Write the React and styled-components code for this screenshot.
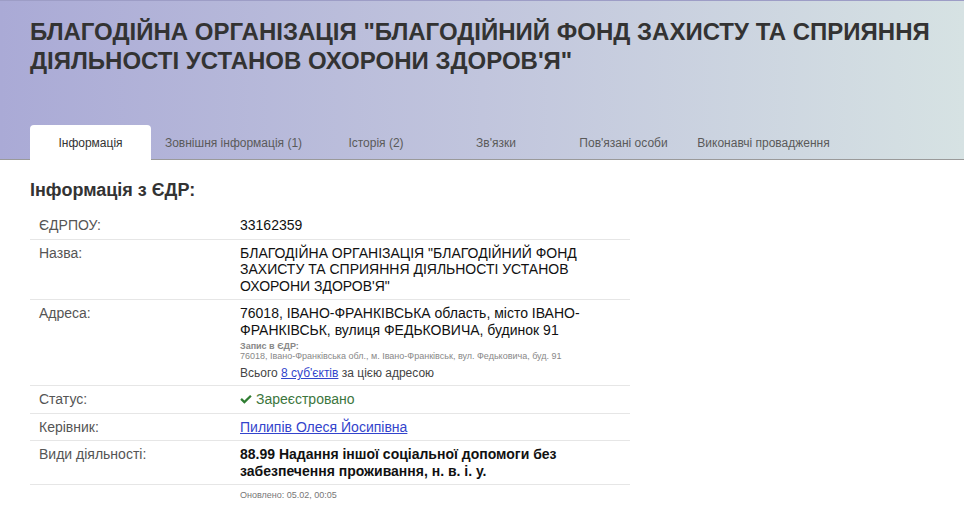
import React from "react";
import styled, { createGlobalStyle } from "styled-components";

const GlobalStyle = createGlobalStyle`
  body {
    margin: 0;
    background: #fff;
    font-family: "Liberation Sans", Arial, sans-serif;
    color: #222;
  }
`;

const Header = styled.header`
  background: linear-gradient(to right, #aaaad6 0%, #c1c5dd 50%, #d6e2e3 100%);
  border-top: 1px solid #9d9dc6;
  border-bottom: 1px solid #9a9a9a;
  padding: 16px 30px 0;
  display: flex;
  flex-direction: column;
`;

const Title = styled.h1`
  margin: 0;
  font-size: 24px;
  line-height: 29px;
  font-weight: bold;
  color: #333;
  max-width: 910px;
`;

const Tabs = styled.nav`
  display: flex;
  margin-top: 50px;
  margin-bottom: -1px;
`;

const Tab = styled.div`
  width: ${(p) => p.$w}px;
  height: 35px;
  box-sizing: border-box;
  display: flex;
  align-items: center;
  justify-content: center;
  font-size: 12px;
  color: ${(p) => (p.$active ? "#333" : "#5a5a5a")};
  background: ${(p) => (p.$active ? "#fff" : "transparent")};
  border-radius: 4px 4px 0 0;
  white-space: nowrap;
`;

const Main = styled.main`
  padding: 0 30px;
`;

const Heading = styled.h2`
  margin: 19px 0 11px;
  font-size: 18px;
  line-height: 22px;
  font-weight: bold;
  color: #333;
`;

const Table = styled.div`
  width: 600px;
  font-size: 14px;
`;

const Row = styled.div`
  display: grid;
  grid-template-columns: 210px 1fr;
  padding: 5px 0;
  line-height: 16.5px;
  border-bottom: ${(p) => (p.$last ? "none" : "1px solid #e6e6e6")};
`;

const Label = styled.div`
  padding-left: 9px;
  color: #555;
`;

const Value = styled.div`
  padding-right: 12px;
  color: ${(p) => (p.$green ? "#3c763d" : "#111")};
  font-weight: ${(p) => (p.$bold ? "bold" : "normal")};
`;

const Note = styled.div`
  margin-top: 3px;
  font-size: 9px;
  line-height: 10px;
  color: #888;
`;

const NoteTitle = styled.div`
  font-weight: bold;
`;

const Count = styled.div`
  margin-top: 5px;
  font-size: 12px;
  line-height: 14px;
  color: #444;
`;

const Link = styled.a`
  color: #3344cc;
  text-decoration: underline;
`;

const CheckIcon = styled.svg`
  width: 12px;
  height: 11px;
  margin-right: 4px;
  vertical-align: -1px;
  fill: #2f7d32;
`;

const Updated = styled.div`
  font-size: 9px;
  color: #777;
  line-height: 10px;
`;

const tabs = [
  { label: "Інформація", w: 121, active: true },
  { label: "Зовнішня інформація (1)", w: 165 },
  { label: "Історія (2)", w: 120 },
  { label: "Зв'язки", w: 120 },
  { label: "Пов'язані особи", w: 135 },
  { label: "Виконавчі провадження", w: 145 },
];

export default function App() {
  return (
    <>
      <GlobalStyle />
      <Header>
        <Title>
          БЛАГОДІЙНА ОРГАНІЗАЦІЯ "БЛАГОДІЙНИЙ ФОНД ЗАХИСТУ ТА СПРИЯННЯ
          ДІЯЛЬНОСТІ УСТАНОВ ОХОРОНИ ЗДОРОВ'Я"
        </Title>
        <Tabs>
          {tabs.map((t) => (
            <Tab key={t.label} $w={t.w} $active={t.active}>
              {t.label}
            </Tab>
          ))}
        </Tabs>
      </Header>
      <Main>
        <Heading>Інформація з ЄДР:</Heading>
        <Table>
          <Row>
            <Label>ЄДРПОУ:</Label>
            <Value>33162359</Value>
          </Row>
          <Row>
            <Label>Назва:</Label>
            <Value>
              БЛАГОДІЙНА ОРГАНІЗАЦІЯ "БЛАГОДІЙНИЙ ФОНД ЗАХИСТУ ТА СПРИЯННЯ
              ДІЯЛЬНОСТІ УСТАНОВ ОХОРОНИ ЗДОРОВ'Я"
            </Value>
          </Row>
          <Row>
            <Label>Адреса:</Label>
            <Value>
              76018, ІВАНО-ФРАНКІВСЬКА область, місто ІВАНО-ФРАНКІВСЬК, вулиця
              ФЕДЬКОВИЧА, будинок 91
              <Note>
                <NoteTitle>Запис в ЄДР:</NoteTitle>
                76018, Івано-Франківська обл., м. Івано-Франківськ, вул.
                Федьковича, буд. 91
              </Note>
              <Count>
                Всього <Link href="#">8 суб'єктів</Link> за цією адресою
              </Count>
            </Value>
          </Row>
          <Row>
            <Label>Статус:</Label>
            <Value $green>
              <CheckIcon viewBox="0 0 12 10">
                <path d="M0.3 5.2 L1.9 3.6 L4.4 6.1 L10.1 0.4 L11.7 2 L4.4 9.3 Z" />
              </CheckIcon>
              Зареєстровано
            </Value>
          </Row>
          <Row>
            <Label>Керівник:</Label>
            <Value>
              <Link href="#">Пилипів Олеся Йосипівна</Link>
            </Value>
          </Row>
          <Row>
            <Label>Види діяльності:</Label>
            <Value $bold>
              88.99 Надання іншої соціальної допомоги без забезпечення
              проживання, н. в. і. у.
            </Value>
          </Row>
          <Row $last>
            <Label />
            <Value>
              <Updated>Оновлено: 05.02, 00:05</Updated>
            </Value>
          </Row>
        </Table>
      </Main>
    </>
  );
}
